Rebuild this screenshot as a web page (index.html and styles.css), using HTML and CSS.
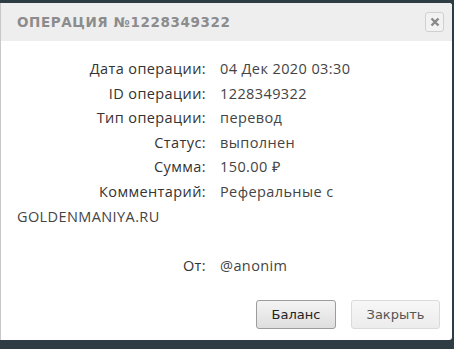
FILE: index.html
```html
<!DOCTYPE html>
<html lang="ru">
<head>
    <meta charset="UTF-8">
    <title>Операция</title>
    <link rel="stylesheet" href="styles.css">
</head>
<body>
    <div class="dialog">
        <div class="dialog-header">
            <span class="dialog-title">Операция №1228349322</span>
            <button class="close-btn" title="Закрыть">
                <svg width="10" height="10" viewBox="0 0 10 10">
                    <path d="M1.5 1.5 L8.5 8.5 M8.5 1.5 L1.5 8.5" stroke="#888" stroke-width="2.4" stroke-linecap="butt"/>
                </svg>
            </button>
        </div>

        <div class="dialog-body">
            <div class="row"><span class="label">Дата операции:</span><span class="value">04 Дек 2020 03:30</span></div>
            <div class="row"><span class="label">ID операции:</span><span class="value">1228349322</span></div>
            <div class="row"><span class="label">Тип операции:</span><span class="value">перевод</span></div>
            <div class="row"><span class="label">Статус:</span><span class="value">выполнен</span></div>
            <div class="row"><span class="label">Сумма:</span><span class="value">150.00 ₽</span></div>
            <div class="row"><span class="label">Комментарий:</span><span class="value">Реферальные с GOLDENMANIYA.RU</span></div>
            <div class="row">&nbsp;</div>
            <div class="row"><span class="label">От:</span><span class="value">@anonim</span></div>
        </div>

        <div class="dialog-footer">
            <button class="btn btn-primary">Баланс</button>
            <button class="btn btn-light">Закрыть</button>
        </div>
    </div>
</body>
</html>
```

FILE: styles.css
```css
* {
    margin: 0;
    padding: 0;
    box-sizing: border-box;
}

body {
    background-color: #2e3d44;
    padding-top: 3px;
    font-family: 'Open Sans', sans-serif;
}

/* Dialog */
.dialog {
    width: 452px;
    background: #fff;
    border-left: 1px solid #c8c8c8;
    border-radius: 0 3px 3px 0;
}

.dialog-header {
    height: 38px;
    background: #eeeeee;
    display: flex;
    align-items: center;
    justify-content: space-between;
    padding: 0 8px 0 16px;
    border-radius: 0 3px 0 0;
}

.dialog-title {
    color: #8c8c8c;
    font-family: 'DejaVu Sans', sans-serif;
    font-weight: 700;
    font-size: 13.5px;
    letter-spacing: 0.6px;
    text-transform: uppercase;
}

.close-btn {
    width: 19px;
    height: 20px;
    border: 1px solid #d0d0d0;
    border-radius: 3px;
    background: #f2f2f2;
    display: flex;
    align-items: center;
    justify-content: center;
    cursor: pointer;
}

/* Body */
.dialog-body {
    padding: 16px 16px 0 16px;
    font-size: 14.5px;
    letter-spacing: 0.4px;
    line-height: 24.6px;
    color: #444;
}

.label {
    display: inline-block;
    width: 189px;
    text-align: right;
    margin-right: 14px;
    color: #333;
}

/* Footer */
.dialog-footer {
    display: flex;
    justify-content: flex-end;
    gap: 15px;
    padding: 22px 12px 11px 0;
}

.btn {
    height: 29px;
    font-family: 'DejaVu Sans', sans-serif;
    font-size: 13px;
    border-radius: 3px;
    cursor: pointer;
}

.btn-primary {
    width: 80px;
    color: #222;
    border: 1px solid #9c9c9c;
    background: linear-gradient(#f4f4f4, #dedede);
}

.btn-light {
    width: 89px;
    color: #555;
    border: 1px solid #dadada;
    background: linear-gradient(#f7f7f7, #ececec);
}
```
